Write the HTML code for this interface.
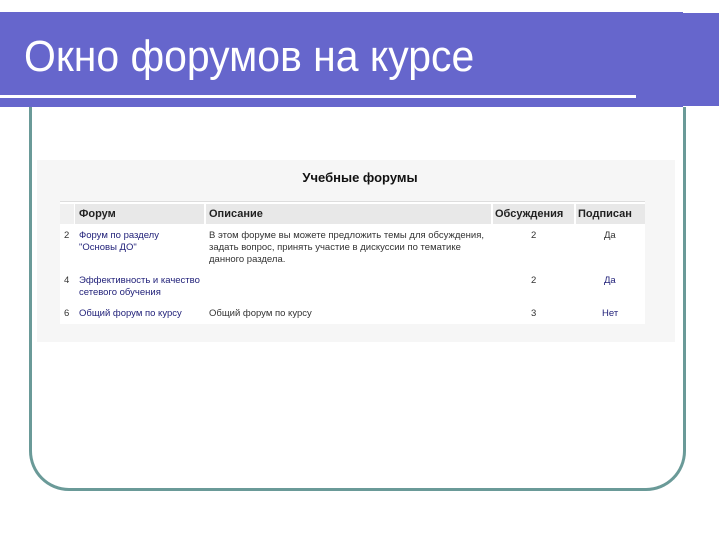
<!DOCTYPE html>
<html><head><meta charset="utf-8"><style>
body{margin:0;width:720px;height:540px;background:#fff;position:relative;overflow:hidden;font-family:"Liberation Sans",sans-serif}
.band{position:absolute;left:0;top:12px;width:683px;height:95px;background:#6666cc}
.band2{position:absolute;left:683px;top:13px;width:36px;height:93px;background:#6666cc}
.line{position:absolute;left:0;top:95px;width:636px;height:3px;background:#fff}
.title{position:absolute;left:24px;top:35px;color:#fff;font-size:44px;line-height:44px;white-space:nowrap;transform:scaleX(0.93);transform-origin:0 0}
.frame{position:absolute;left:29px;top:107px;width:651px;height:381px;border:3px solid #6a9a98;border-top:none;border-radius:0 0 40px 40px}
.panel{position:absolute;left:37px;top:160px;width:638px;height:182px;background:#f6f6f6}
.h{position:absolute;left:0;width:720px;top:170px;text-align:center;font-weight:bold;font-size:13px;color:#111}
.t{position:absolute;left:60px;top:201px;width:585px;height:122px;background:#fff;border-top:1px solid #ddd}
.hd{position:absolute;top:2px;height:20px;background:#e8e8e8;font-size:11px;font-weight:bold;line-height:21px;color:#222}
.c{position:absolute;font-size:9.5px;line-height:12px;color:#333;white-space:nowrap}
.l{color:#22227a}
</style></head><body>
<div class="band"></div><div class="band2"></div><div class="line"></div>
<div class="title">Окно форумов на курсе</div>
<div class="frame"></div>
<div class="panel"></div>
<div class="h">Учебные форумы</div>
<div class="t">
<div class="hd" style="left:0;width:14px;background:#f0f0f0"></div>
<div class="hd" style="left:15px;width:125px;padding-left:4px">Форум</div>
<div class="hd" style="left:146px;width:282px;padding-left:3px">Описание</div>
<div class="hd" style="left:433px;width:79px;padding-left:2px">Обсуждения</div>
<div class="hd" style="left:516px;width:67px;padding-left:2px">Подписан</div>
<div class="c" style="left:4px;top:28px">2</div>
<div class="c l" style="left:19px;top:28px">Форум по разделу<br>"Основы ДО"</div>
<div class="c" style="left:149px;top:28px">В этом форуме вы можете предложить темы для обсуждения,<br>задать вопрос, принять участие в дискуссии по тематике<br>данного раздела.</div>
<div class="c" style="left:471px;top:28px">2</div>
<div class="c" style="left:544px;top:28px">Да</div>
<div class="c" style="left:4px;top:73px">4</div>
<div class="c l" style="left:19px;top:73px">Эффективность и качество<br>сетевого обучения</div>
<div class="c" style="left:471px;top:73px">2</div>
<div class="c l" style="left:544px;top:73px">Да</div>
<div class="c" style="left:4px;top:106px">6</div>
<div class="c l" style="left:19px;top:106px">Общий форум по курсу</div>
<div class="c" style="left:149px;top:106px">Общий форум по курсу</div>
<div class="c" style="left:471px;top:106px">3</div>
<div class="c l" style="left:542px;top:106px">Нет</div>
</div>
</body></html>
